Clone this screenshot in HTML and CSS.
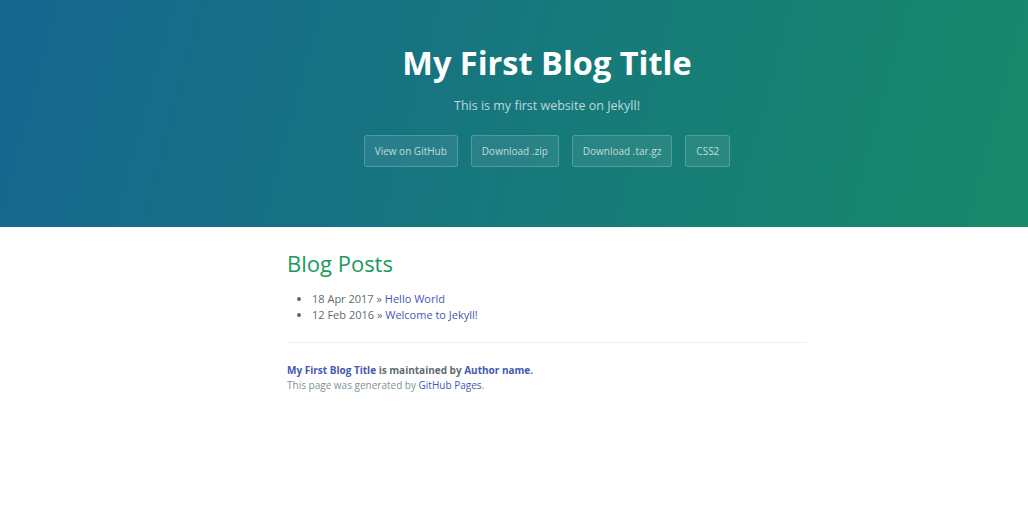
FILE: index.html
```html
<!DOCTYPE html>
<html lang="en">
<head>
<meta charset="utf-8">
<title>My First Blog Title</title>
<link rel="stylesheet" href="styles.css">
</head>
<body>
<section class="page-header">
  <h1 class="project-name">My First Blog Title</h1>
  <h2 class="project-tagline">This is my first website on Jekyll!</h2>
  <div class="buttons">
    <a href="#" class="btn">View on GitHub</a>
    <a href="#" class="btn">Download .zip</a>
    <a href="#" class="btn">Download .tar.gz</a>
    <a href="#" class="btn">CSS2</a>
  </div>
</section>
<section class="main-content">
  <h2 class="section-title">Blog Posts</h2>
  <ul class="posts">
    <li><span>18 Apr 2017</span> &raquo; <a href="#">Hello World</a></li>
    <li><span>12 Feb 2016</span> &raquo; <a href="#">Welcome to Jekyll!</a></li>
  </ul>
  <footer class="site-footer">
    <span class="site-footer-owner"><a href="#">My First Blog Title</a> is maintained by <a href="#">Author name</a>.</span>
    <span class="site-footer-credits">This page was generated by <a href="#">GitHub Pages</a>.</span>
  </footer>
</section>
</body>
</html>
```

FILE: styles.css
```css
* { box-sizing: border-box; }

body {
  margin: 0;
  font-family: "Open Sans", "Helvetica Neue", Helvetica, Arial, sans-serif;
  color: #606c71;
  background: #fff;
}

a { color: #4458b4; text-decoration: none; }

.page-header {
  height: 227px;
  padding-top: 42px;
  padding-left: 66px;
  text-align: center;
  color: #fff;
  background-color: #178a69;
  background-image: linear-gradient(105deg, #166690, #178a69);
}

.project-name {
  margin: 0;
  font-size: 32.5px;
  font-weight: 700;
  line-height: 42px;
}

.project-tagline {
  margin: 13px 0 0;
  font-size: 12.5px;
  font-weight: 400;
  line-height: 18px;
  color: rgba(255, 255, 255, 0.72);
}

.buttons {
  margin-top: 20px;
  display: flex;
  justify-content: center;
  gap: 13px;
}

.btn {
  display: inline-block;
  padding: 7px 10px;
  font-size: 10px;
  line-height: 16px;
  color: rgba(255, 255, 255, 0.72);
  background-color: rgba(255, 255, 255, 0.08);
  border: 1px solid rgba(255, 255, 255, 0.2);
  border-radius: 3px;
}

.main-content {
  width: 520px;
  margin-left: 287px;
  padding-top: 24px;
  font-size: 11px;
}

.section-title {
  margin: 0;
  font-size: 22px;
  font-weight: 400;
  line-height: 25px;
  color: #1a9a5c;
}

.posts {
  margin: 15px 0 0;
  padding-left: 25px;
  line-height: 16px;
}

.site-footer {
  margin-top: 19px;
  padding-top: 20px;
  border-top: 1px solid #eff0f1;
  font-size: 10px;
  line-height: 15px;
}

.site-footer-owner {
  display: block;
  font-weight: 700;
}

.site-footer-credits {
  display: block;
  color: #819198;
}
```
